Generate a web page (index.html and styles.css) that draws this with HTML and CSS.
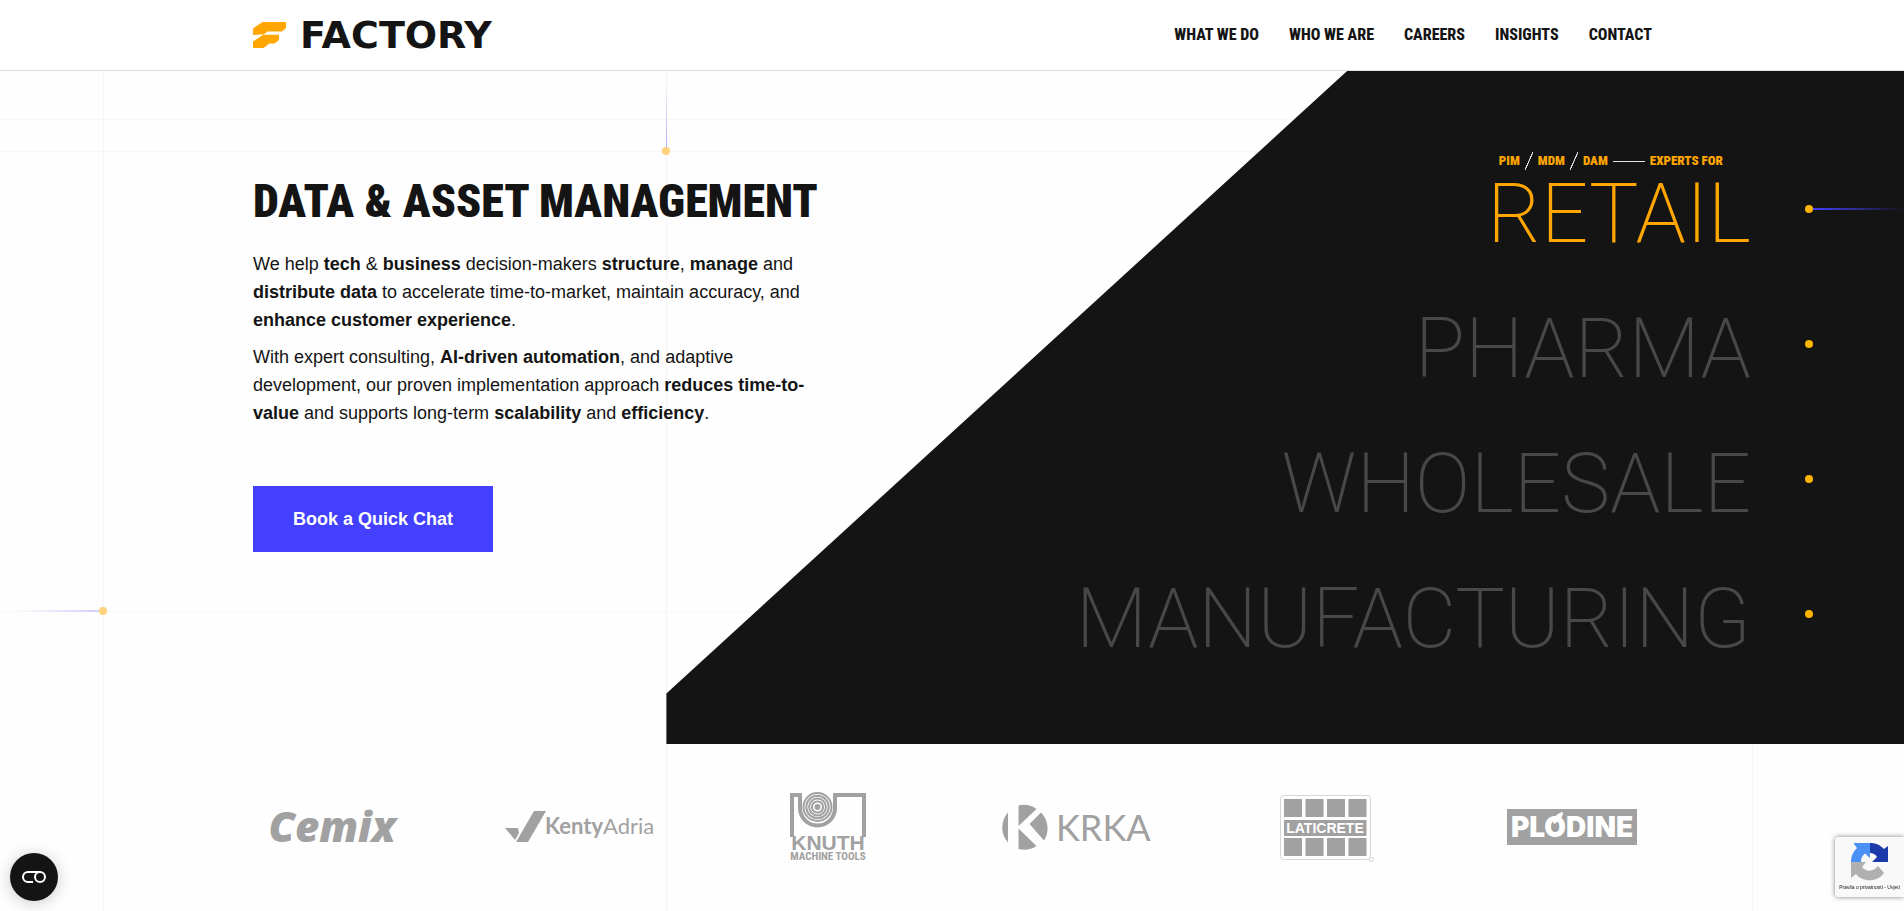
FILE: index.html
```html
<!DOCTYPE html>
<html lang="en">
<head>
<meta charset="utf-8">
<meta name="viewport" content="width=device-width, initial-scale=1">
<title>Factory – Data &amp; Asset Management</title>
<link rel="stylesheet" href="styles.css">
</head>
<body>
<div class="lines" aria-hidden="true">
  <span class="v-line v-left"></span>
  <span class="v-line v-mid"></span>
  <span class="v-line v-right"></span>
</div>

<header class="header">
  <div class="container header-row">
    <a class="logo" href="#">
      <svg class="logo-mark" viewBox="0 0 34 26" aria-hidden="true">
        <path d="M0 6.5 9.5 0H33v6L26 12H13L0 13Z"/>
        <path d="M0 19.5 10 12.5H26v5.5L21.500 21.500H16.500L10.500 26H0Z"/>
        <path class="logo-gap" d="M0 13.200H9.800L14.500 9.600H34V12.600H10.500L0 19Z"/>
      </svg>
      <span class="logo-text">FACTORY</span>
    </a>
    <nav class="nav" aria-label="Main">
      <a href="#">WHAT WE DO</a>
      <a href="#">WHO WE ARE</a>
      <a href="#">CAREERS</a>
      <a href="#">INSIGHTS</a>
      <a href="#">CONTACT</a>
    </nav>
  </div>
</header>

<main>
  <section class="hero">
    <div class="hero-lines" aria-hidden="true">
      <span class="h-line h-first"></span>
      <span class="h-line h-second"></span>
      <span class="h-line h-third"></span>
      <span class="beam beam-top"></span>
      <span class="dot soft dot-top"></span>
      <span class="beam beam-left"></span>
      <span class="dot soft dot-left"></span>
    </div>
    <div class="panel">
      <ul class="sectors">
        <li class="sector active">
          <span class="expert"><span>PIM</span><i class="slash"></i><span>MDM</span><i class="slash"></i><span>DAM</span><i class="dash"></i><span>EXPERTS FOR</span></span>
          <a href="#">RETAIL</a><span class="dot"></span>
        </li>
        <li class="sector"><a href="#">PHARMA</a><span class="dot"></span></li>
        <li class="sector"><a href="#">WHOLESALE</a><span class="dot"></span></li>
        <li class="sector"><a href="#">MANUFACTURING</a><span class="dot"></span></li>
      </ul>
    </div>
    <div class="container intro">
      <h1>DATA &amp; ASSET MANAGEMENT</h1>
      <div class="copy">
        <p>We help <b>tech</b> &amp; <b>business</b> decision-makers <b>structure</b>, <b>manage</b> and <b>distribute data</b> to accelerate time-to-market, maintain accuracy, and <b>enhance customer experience</b>.</p>
        <p>With expert consulting, <b>AI-driven automation</b>, and adaptive development, our proven implementation approach <b>reduces time-to-value</b> and supports long-term <b>scalability</b> and <b>efficiency</b>.</p>
      </div>
      <a class="cta" href="#">Book a Quick Chat</a>
    </div>
  </section>

  <section class="clients" aria-label="Clients">
    <svg viewBox="0 0 150 70" role="img" aria-label="Cemix">
      <text class="cemix" x="75" y="50" text-anchor="middle">Cemix</text>
    </svg>
    <svg viewBox="0 0 150 70" role="img" aria-label="KentyAdria">
      <path d="M0 36H13L14 41 10 48ZM29 19H41L23 50H11Z"/>
      <text class="kenty" x="40" y="42"><tspan font-weight="700">Kenty</tspan><tspan font-weight="400">Adria</tspan></text>
    </svg>
    <svg viewBox="0 0 76 70" role="img" aria-label="Knuth Machine Tools">
      <path class="stroke" stroke-width="4" d="M2 45V3H10V16A17.500 17.500 0 0 0 45 16V3H74V45"/>
      <g class="stroke" stroke-width="2"><circle cx="27.500" cy="15" r="14"/><circle cx="27.500" cy="15" r="11.200"/><circle cx="27.500" cy="15" r="8.400"/><circle cx="27.500" cy="15" r="5.600"/></g>
      <circle cx="27.500" cy="15" r="3"/>
      <text class="knuth" x="38" y="58" text-anchor="middle">KNUTH</text>
      <text class="tools" x="38" y="68" text-anchor="middle">MACHINE TOOLS</text>
    </svg>
    <svg viewBox="0 0 150 70" role="img" aria-label="Krka">
      <path d="M7 20.500V50.500A22.500 22.500 0 0 1 7 20.500ZM17.500 13.500A22.500 22.500 0 0 1 35.500 17L17.500 34ZM40 20.500A22.500 22.500 0 0 1 43 48.500L28.500 32ZM17.500 36.500 35.500 54A22.500 22.500 0 0 1 17.500 57Z"/>
      <text class="krka" x="55" y="49">KRKA</text>
    </svg>
    <svg viewBox="-7 0 104 70" role="img" aria-label="Laticrete">
      <rect class="frame" x="1.500" y="3.500" width="90" height="64" rx="3"/>
      <path d="M5 7h18v18H5zM26.500 7h18v18h-18zM48 7h18v18H48zM69.500 7h18v18h-18zM5 28h82.500v16H5zM5 46h18v18H5zM26.500 46h18v18h-18zM48 46h18v18H48zM69.500 46h18v18h-18z"/>
      <text class="lati" x="46" y="41" text-anchor="middle">LATICRETE</text>
      <circle class="frame" cx="92.500" cy="67.500" r="2"/>
    </svg>
    <svg viewBox="0 0 130 70" role="img" aria-label="Plodine">
      <rect x="0" y="17" width="130" height="36"/>
      <text class="plod" x="65" y="45" text-anchor="middle">PLODINE</text>
      <path class="leaf" d="M46 30C46 26 50 21 56 20 56 25 53 29 47 32Z"/>
    </svg>
  </section>
</main>

<button class="cookie" type="button" aria-label="Cookie settings">
  <svg viewBox="0 0 26 14" aria-hidden="true"><path d="M12 12H7A5 5 0 0 1 7 2H19"/><circle cx="19" cy="7" r="5"/></svg>
</button>
<aside class="captcha">
  <svg viewBox="0 0 38 38" aria-hidden="true">
    <path fill="#1c3aa9" d="M19 0C25 0 29 2 33 6L37 3V19H21L26 14C24 11 22 10 19 10Z"/>
    <path fill="#4a90f5" d="M19 0V15L14 10.500C11 13 10 15 10 19H0C0 13 2 9 6 5L3 1V0Z"/>
    <path fill="#b0b0b0" d="M0 19H15L11 24C16 30 23 28 27 23L33 30C26 40 11 39 5 31L0 35Z"/>
  </svg>
  <span>Pravila o privatnosti - Uvjeti</span>
</aside>
</body>
</html>
```
FILE: styles.css
```css
* { box-sizing: border-box; }

body {
  margin: 0;
  position: relative;
  min-height: 100vh;
  overflow-x: hidden;
  background: #fefefe;
  color: #141414;
  font-family: "Liberation Sans", Arial, sans-serif;
  font-size: 18px;
}

a { color: inherit; text-decoration: none; }

.container {
  width: 100%;
  max-width: 1400px;
  margin: 0 auto;
}

/* Header */
.header {
  position: relative;
  background: #fff;
  border-bottom: 1px solid #dbe0e4;
}
.header-row {
  display: flex;
  align-items: center;
  justify-content: space-between;
  height: 70px;
}
.logo { display: flex; align-items: center; gap: 13px; padding-left: 1px; }
.logo-mark { width: 34px; height: 26px; fill: #ffa600; }
.logo-gap { fill: #fff; }
.logo-text { font: 700 38px/40px "DejaVu Sans", sans-serif; }
.nav { display: flex; gap: 30px; font: 800 16px/28px "Roboto Condensed", "Liberation Sans Narrow", sans-serif; }

/* Background grid */
.lines { position: absolute; inset: 71px 0 0; }
.v-line { position: absolute; top: 0; bottom: 0; width: 1px; background: #f5f5f5; }
.v-left { left: 5.4%; }
.v-mid { left: 35%; }
.v-right { left: 92%; }
.hero-lines { position: absolute; inset: 0; }
.h-line { position: absolute; left: 0; right: 0; height: 1px; background: #f7f7f7; }
.h-first { top: 48px; }
.h-second { top: 80px; }
.h-third { top: 540px; }
.dot { width: 8px; height: 8px; border-radius: 50%; background: #ffb400; }
.soft { position: absolute; background: #ffd27f; transform: translate(-50%, -50%); }
.dot-top { left: 35%; top: 80px; }
.dot-left { left: 5.4%; top: 540px; }
.beam { position: absolute; }
.beam-top { left: 35%; top: 14px; width: 1px; height: 66px; background: linear-gradient(transparent, #aaa8fb); }
.beam-left { left: 1%; width: 4.4%; top: 539px; height: 2px; background: linear-gradient(90deg, transparent, #cfcefc); }

/* Hero */
.hero {
  position: relative;
  display: grid;
  grid-template-columns: 35% 65%;
}
.intro {
  position: relative;
  grid-column: 1 / -1;
  grid-row: 1;
  padding: 96px 0 190px 1px;
  pointer-events: none;
}
.intro a { pointer-events: auto; }
h1 {
  margin: 0 0 15px;
  font: 900 46px/68px "Roboto Condensed", "Liberation Sans Narrow", sans-serif;
}
.copy { max-width: 560px; line-height: 28px; }
.copy p { margin: 0 0 9px; }
.cta {
  display: inline-flex;
  align-items: center;
  justify-content: center;
  width: 240px;
  height: 66px;
  margin-top: 50px;
  background: #4340ff;
  color: #fff;
  font-weight: 700;
}
.panel {
  position: relative;
  grid-column: 2;
  grid-row: 1;
  padding: 70px 0 63px;
  background: #141414;
  clip-path: polygon(55% 0, 100% 0, 100% 100%, 0 100%, 0 92.500%);
}
.sectors {
  margin: 0;
  padding: 0;
  list-style: none;
}
.sector {
  position: relative;
  display: flex;
  align-items: center;
  justify-content: flex-end;
  gap: 54px;
  height: 135px;
  padding-right: 91px;
  color: #47484a;
  font: 200 83px/100px Roboto, "Liberation Sans", sans-serif;
}
.sector a { padding-top: 10px; }
.active { color: #ffa600; }
.active::after {
  content: "";
  position: absolute;
  right: 0;
  width: 91px;
  height: 2px;
  background: linear-gradient(90deg, #4340ff, transparent);
}
.expert {
  position: absolute;
  right: 181px;
  top: 10px;
  display: flex;
  align-items: center;
  gap: 5px;
  font: 900 13px/20px "Roboto Condensed", "Liberation Sans Narrow", sans-serif;
}
.slash { width: 8px; height: 18px; background: linear-gradient(to bottom right, transparent 45%, #ddd 47%, #ddd 53%, transparent 55%); }
.dash { width: 32px; height: 1px; background: #e4e4e4; }

/* Clients */
.clients {
  position: relative;
  display: grid;
  grid-template-columns: repeat(6, 1fr);
  justify-items: center;
  width: 100%;
  max-width: 1488px;
  margin: 0 auto;
  padding: 48px 0 40px;
}
.clients svg { height: 70px; fill: #a1a1a1; }
.stroke { fill: none; stroke: #a1a1a1; }
.clients .frame { fill: none; stroke: #d6d6d6; }
.cemix { font: italic 800 42px "Open Sans", sans-serif; }
.kenty { font-family: Lato, sans-serif; font-size: 22px; }
.knuth { font: 700 21px "Liberation Sans", sans-serif; }
.tools { font: 700 11px "Roboto Condensed", sans-serif; }
.krka { font: 400 36px Lato, sans-serif; }
.clients .lati { font: 700 14px "Liberation Sans", sans-serif; fill: #fff; }
.clients .plod { font: 900 28px Inter, sans-serif; fill: #fff; }
.clients .leaf { fill: #fff; }

/* Floating widgets */
.cookie {
  position: fixed;
  left: 10px;
  bottom: 10px;
  display: flex;
  align-items: center;
  justify-content: center;
  width: 48px;
  height: 48px;
  padding: 0;
  border: 0;
  border-radius: 50%;
  background: #141414;
  box-shadow: 0 2px 16px rgba(0, 0, 0, 0.2);
}
.cookie svg { width: 26px; height: 14px; fill: none; stroke: #fff; stroke-width: 2; }
.captcha {
  position: fixed;
  right: 0;
  bottom: 14px;
  display: flex;
  flex-direction: column;
  align-items: center;
  gap: 2px;
  width: 69px;
  height: 60px;
  padding-top: 6px;
  border-radius: 3px 0 0 3px;
  background: #f9f9f9;
  box-shadow: 0 0 5px #808080;
  font-size: 5px;
  line-height: 8px;
  white-space: nowrap;
}
.captcha svg { width: 38px; height: 38px; }
```
